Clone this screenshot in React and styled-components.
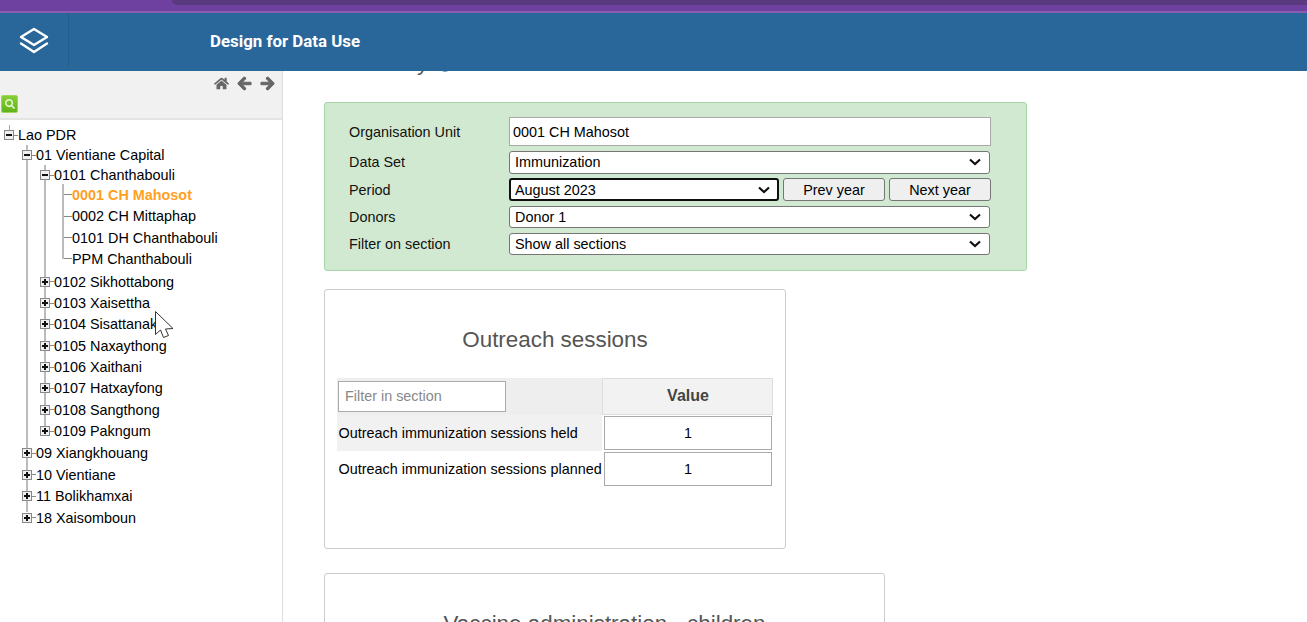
import React from "react";
import styled, { createGlobalStyle } from "styled-components";
import { FaHome, FaArrowLeft, FaArrowRight, FaSearch, FaQuestionCircle } from "react-icons/fa";

const chevron =
  "data:image/svg+xml," +
  encodeURIComponent(
    '<svg xmlns="http://www.w3.org/2000/svg" width="12" height="8" viewBox="0 0 12 8"><path d="M1 1.5 L6 6 L11 1.5" fill="none" stroke="#111" stroke-width="2.2"/></svg>'
  );

const GlobalStyle = createGlobalStyle`
  html, body {
    margin: 0;
    padding: 0;
    height: 100%;
    overflow: hidden;
    background: #fff;
    font-family: "Liberation Sans", Arial, sans-serif;
    font-size: 14.4px;
    color: #000;
  }
  * { box-sizing: border-box; }
`;

const Page = styled.div`
  position: relative;
  display: flex;
  flex-direction: column;
  height: 622px;
  overflow: hidden;
`;

const BrowserStrip = styled.div`
  height: 13px;
  flex: none;
  background: #6e41a0;
  border-bottom: 2px solid #8a5db0;
  padding-left: 172px;
`;

const BrowserTab = styled.div`
  height: 5px;
  background: #5a3a7e;
  border-bottom-left-radius: 8px;
`;

const Header = styled.header`
  height: 58px;
  flex: none;
  display: flex;
  background: #29669a;
  color: #fff;
`;

const LogoCell = styled.div`
  width: 69px;
  height: 53px;
  display: flex;
  align-items: center;
  justify-content: center;
  border-right: 1px solid #255c8b;
  padding-top: 3px;
`;

const HeaderTitle = styled.div`
  margin-left: 141px;
  height: 56px;
  display: flex;
  align-items: center;
  font-family: Roboto, "Liberation Sans", sans-serif;
  font-weight: 700;
  font-size: 16.85px;
`;

const Body = styled.div`
  flex: 1;
  display: flex;
  min-height: 0;
`;

const Sidebar = styled.aside`
  width: 283px;
  flex: none;
  border-right: 1px solid #ddd;
`;

const SideToolbar = styled.div`
  height: 49px;
  background: #f1f1f1;
  border-bottom: 2px solid #e4e4e4;
  display: flex;
  flex-direction: column;
`;

const NavIcons = styled.div`
  display: flex;
  justify-content: flex-end;
  align-items: center;
  gap: 8px;
  height: 24px;
  padding-right: 7.5px;
  color: #666;
  font-size: 15px;
`;

const NavArrow = styled.span`
  display: flex;

  svg {
    stroke: currentColor;
    stroke-width: 36;
  }
`;

const SearchButton = styled.div`
  width: 17px;
  height: 18px;
  margin-left: 1px;
  border-radius: 2px;
  border: 1px solid #9fd65a;
  background: linear-gradient(#86cf34, #5fb31a);
  display: flex;
  align-items: center;
  justify-content: center;
  color: #e6f6d2;
  font-size: 10px;
`;

const TreeRoot = styled.ul`
  position: relative;
  list-style: none;
  margin: 0;
  padding: 5px 0 0 4px;

  &::before {
    content: "";
    position: absolute;
    left: 9px;
    top: 5px;
    width: 1px;
    height: 5px;
    background: #aaa;
  }
`;

const TreeBranch = styled.ul`
  position: relative;
  list-style: none;
  margin: ${(p) => (p.$leaves ? "-0.8px 0 1.6px" : "0 0 0.7px")};
  padding: 0 0 0 18px;

  &::before {
    content: "";
    position: absolute;
    left: 22px;
    top: 0;
    bottom: ${(p) => (p.$leaves ? "11px" : "16px")};
    width: 2px;
    background: #bbb;
  }
`;

const TreeRow = styled.div`
  position: relative;
  display: flex;
  align-items: center;
  height: ${(p) => p.$height}px;
  white-space: nowrap;
  color: ${(p) => (p.$selected ? "#ffa01f" : "#000")};
  font-weight: ${(p) => (p.$selected ? 700 : 400)};
`;

const Toggle = styled.span`
  position: relative;
  z-index: 1;
  width: 10px;
  height: 10px;
  flex: none;
  background: #f0f0f0;
  border: 1px solid #888;

  &::before {
    content: "";
    position: absolute;
    left: 1px;
    top: 3px;
    width: 6px;
    height: 2px;
    background: #111;
  }

  &::after {
    content: "";
    display: ${(p) => (p.$open ? "none" : "block")};
    position: absolute;
    left: 3px;
    top: 1px;
    width: 2px;
    height: 6px;
    background: #111;
  }
`;

const Dash = styled.span`
  width: 4px;
  height: 1px;
  flex: none;
  background: #888;
`;

const LeafDash = styled.span`
  width: 8px;
  height: 1px;
  margin-left: 6px;
  flex: none;
  background: #888;
`;

const Main = styled.main`
  flex: 1;
  min-width: 0;
  overflow: hidden;
`;

const Content = styled.div`
  margin-top: -23.5px;
  padding-left: 41px;
`;

const PageHeading = styled.h2`
  margin: 0 0 24.5px;
  height: 30px;
  line-height: 30px;
  font-size: 22.6px;
  font-weight: 400;
  color: #555;
  display: flex;
  align-items: center;
`;

const HelpIcon = styled.span`
  display: flex;
  margin: 5px 0 0 10px;
  color: #3c7ab0;
  font-size: 14px;
`;

const SelectionPanel = styled.section`
  width: 703px;
  padding: 14px 35px 15px 24px;
  background: #d1e9d0;
  border: 1px solid #a8d5a8;
  border-radius: 3px;
  display: grid;
  grid-template-columns: 160px 1fr;
  grid-template-rows: 29px 23px 23px 22px 22px;
  row-gap: 4.7px;
  align-items: center;
`;

const FieldLabel = styled.label`
  color: #111;
`;

const TextField = styled.input`
  width: 482px;
  height: 29px;
  padding: 0 3px;
  border: 1px solid #aaa;
  background: #fff;
  color: #000;
  font: inherit;
  outline: none;
`;

const Select = styled.select`
  appearance: none;
  width: ${(p) => p.$width}px;
  height: 100%;
  padding: 0 0 0 ${(p) => (p.$focused ? 4 : 5)}px;
  border: ${(p) => (p.$focused ? "2px solid #101010" : "1px solid #767676")};
  border-radius: 3px;
  background: #fff url("${chevron}") no-repeat right ${(p) => (p.$focused ? 7 : 8)}px center;
  color: #000;
  font: inherit;
  outline: none;
`;

const PeriodRow = styled.div`
  display: flex;
  height: 100%;
  gap: 4px;
`;

const YearButton = styled.button`
  width: 102px;
  height: 100%;
  padding: 0;
  border: 1px solid #767676;
  border-radius: 3px;
  background: #efefef;
  color: #000;
  font: inherit;
`;

const SectionCard = styled.section`
  width: ${(p) => p.$width}px;
  height: ${(p) => p.$height}px;
  margin-top: ${(p) => p.$gap}px;
  padding: 0 12px;
  background: #fff;
  border: 1px solid #ccc;
  border-radius: 3px;
`;

const SectionTitle = styled.h3`
  margin: 0;
  height: 88px;
  padding-top: 36px;
  line-height: 28px;
  text-align: center;
  font-size: 22.4px;
  font-weight: 400;
  color: #555;
  white-space: nowrap;
`;

const SectionGrid = styled.div`
  display: grid;
  grid-template-columns: 265px 171px;
  grid-template-rows: 37px 36px 36px;
`;

const FilterCell = styled.div`
  background: #eee;
  padding: 3px 0 0 1px;
`;

const FilterInput = styled.input`
  display: block;
  width: 168px;
  height: 31px;
  padding: 0 6px;
  border: 1px solid #aaa;
  background: #fff;
  font: inherit;
  outline: none;

  &::placeholder {
    color: #888;
    opacity: 1;
  }
`;

const ValueHead = styled.div`
  display: flex;
  align-items: center;
  justify-content: center;
  padding-left: 1px;
  background: #f2f2f2;
  border: 1px solid #ddd;
  font-size: 16px;
  font-weight: 700;
  color: #444;
`;

const RowLabel = styled.div`
  display: flex;
  align-items: center;
  padding-left: 1.5px;
  white-space: nowrap;
  background: ${(p) => (p.$shaded ? "#f1f1f1" : "#fff")};
`;

const ValueCell = styled.div`
  padding: 1px 1px 1px 2px;
`;

const ValueInput = styled.input`
  display: block;
  width: 168px;
  height: 34px;
  border: 1px solid #aaa;
  background: #fff;
  text-align: center;
  color: #000;
  font: inherit;
  outline: none;
`;

const Cursor = styled.svg`
  position: absolute;
  left: 155px;
  top: 311px;
  pointer-events: none;
`;

const LEAF = 21.33;
const OPEN = 20;
const ROW = 21.5;

const chanthabouliLeaves = [
  { name: "0001 CH Mahosot", selected: true },
  { name: "0002 CH Mittaphap" },
  { name: "0101 DH Chanthabouli" },
  { name: "PPM Chanthabouli" },
];

const tree = {
  name: "Lao PDR",
  children: [
    {
      name: "01 Vientiane Capital",
      children: [
        { name: "0101 Chanthabouli", children: chanthabouliLeaves },
        { name: "0102 Sikhottabong", closed: true },
        { name: "0103 Xaisettha", closed: true },
        { name: "0104 Sisattanak", closed: true },
        { name: "0105 Naxaythong", closed: true },
        { name: "0106 Xaithani", closed: true },
        { name: "0107 Hatxayfong", closed: true },
        { name: "0108 Sangthong", closed: true },
        { name: "0109 Pakngum", closed: true },
      ],
    },
    { name: "09 Xiangkhouang", closed: true, top: true },
    { name: "10 Vientiane", closed: true, top: true },
    { name: "11 Bolikhamxai", closed: true, top: true },
    { name: "18 Xaisomboun", closed: true, top: true },
  ],
};

function TreeNode({ node }) {
  if (!node.children && !node.closed) {
    return (
      <li>
        <TreeRow $height={LEAF} $selected={node.selected}>
          <LeafDash />
          {node.name}
        </TreeRow>
      </li>
    );
  }
  const open = !!node.children;
  const leaves = open && node.children.every((c) => !c.children && !c.closed);
  return (
    <li>
      <TreeRow $height={open ? OPEN : node.top ? ROW : LEAF}>
        <Toggle $open={open} />
        <Dash />
        {node.name}
      </TreeRow>
      {open && (
        <TreeBranch $leaves={leaves}>
          {node.children.map((c) => (
            <TreeNode key={c.name} node={c} />
          ))}
        </TreeBranch>
      )}
    </li>
  );
}

function Logo() {
  return (
    <svg width="32" height="30" viewBox="0 0 32 30" fill="none" stroke="#fff" strokeWidth="2.4" strokeLinejoin="round" strokeLinecap="round">
      <path d="M16 3 L29 11 L16 19 L3 11 Z" />
      <path d="M3 17.5 L16 26 L29 17.5" />
    </svg>
  );
}

export default function App() {
  return (
    <Page>
      <GlobalStyle />
      <BrowserStrip>
        <BrowserTab />
      </BrowserStrip>
      <Header>
        <LogoCell>
          <Logo />
        </LogoCell>
        <HeaderTitle>Design for Data Use</HeaderTitle>
      </Header>
      <Body>
        <Sidebar>
          <SideToolbar>
            <NavIcons>
              <FaHome />
              <NavArrow>
                <FaArrowLeft />
              </NavArrow>
              <NavArrow>
                <FaArrowRight />
              </NavArrow>
            </NavIcons>
            <SearchButton>
              <FaSearch />
            </SearchButton>
          </SideToolbar>
          <TreeRoot>
            <TreeNode node={tree} />
          </TreeRoot>
        </Sidebar>
        <Main>
          <Content>
            <PageHeading>
              Data entry
              <HelpIcon>
                <FaQuestionCircle />
              </HelpIcon>
            </PageHeading>
            <SelectionPanel>
              <FieldLabel>Organisation Unit</FieldLabel>
              <TextField defaultValue="0001 CH Mahosot" readOnly />
              <FieldLabel>Data Set</FieldLabel>
              <Select $width={481} defaultValue="Immunization">
                <option>Immunization</option>
              </Select>
              <FieldLabel>Period</FieldLabel>
              <PeriodRow>
                <Select $width={270} $focused defaultValue="August 2023">
                  <option>August 2023</option>
                </Select>
                <YearButton>Prev year</YearButton>
                <YearButton>Next year</YearButton>
              </PeriodRow>
              <FieldLabel>Donors</FieldLabel>
              <Select $width={481} defaultValue="Donor 1">
                <option>Donor 1</option>
              </Select>
              <FieldLabel>Filter on section</FieldLabel>
              <Select $width={481} defaultValue="Show all sections">
                <option>Show all sections</option>
              </Select>
            </SelectionPanel>
            <SectionCard $width={462} $height={260} $gap={18}>
              <SectionTitle>Outreach sessions</SectionTitle>
              <SectionGrid>
                <FilterCell>
                  <FilterInput placeholder="Filter in section" />
                </FilterCell>
                <ValueHead>Value</ValueHead>
                <RowLabel $shaded>Outreach immunization sessions held</RowLabel>
                <ValueCell>
                  <ValueInput defaultValue="1" />
                </ValueCell>
                <RowLabel>Outreach immunization sessions planned</RowLabel>
                <ValueCell>
                  <ValueInput defaultValue="1" />
                </ValueCell>
              </SectionGrid>
            </SectionCard>
            <SectionCard $width={561} $height={200} $gap={24}>
              <SectionTitle>Vaccine administration - children</SectionTitle>
            </SectionCard>
          </Content>
        </Main>
      </Body>
      <Cursor width="20" height="28" viewBox="0 0 20 28">
        <path d="M0.5 0.5 L18 17.5 L10.5 18 L13.5 24.5 L8.5 26.5 L5.5 19 L0.5 23.5 Z" fill="#fff" stroke="#333" strokeWidth="1" />
      </Cursor>
    </Page>
  );
}
